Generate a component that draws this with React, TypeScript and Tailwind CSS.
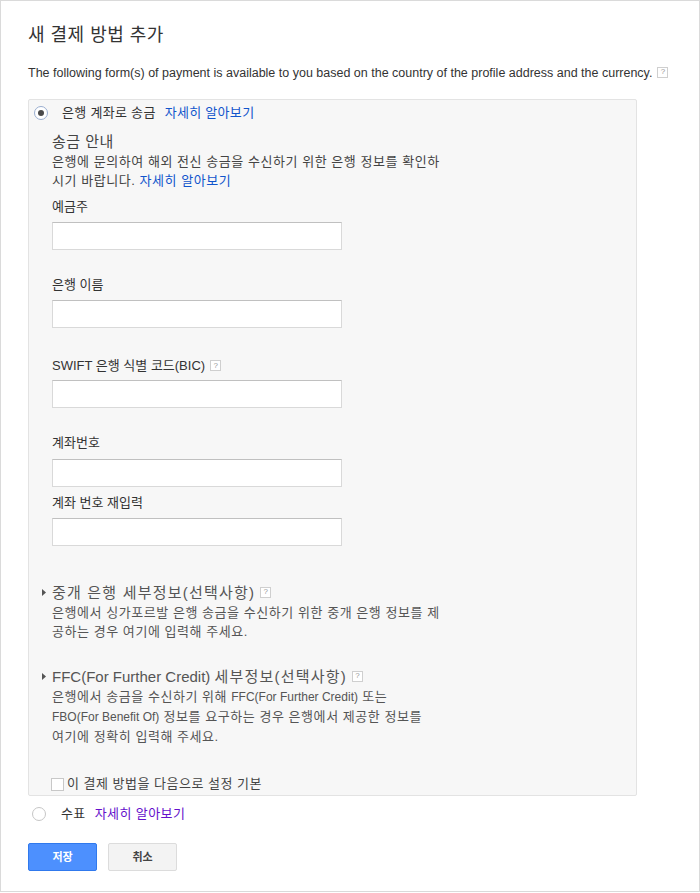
import React from "react";

const font = '"Liberation Sans", Arial, "Noto Sans CJK KR", sans-serif';

function Help() {
  return (
    <span className="inline-flex items-center justify-center w-[11px] h-[11px] border border-[#cfcfcf] bg-white text-[8px] leading-none text-[#999] align-middle ml-[5px] relative top-[-1px] tracking-normal">
      ?
    </span>
  );
}

function Field({ label, help, gapTop, labelGap }: { label: string; help?: boolean; gapTop: string; labelGap: string }) {
  return (
    <div className={gapTop}>
      <div className={`text-[13px] leading-[16px] text-[#333] ${labelGap}`}>
        {label}
        {help && <Help />}
      </div>
      <div className="w-[290px] h-[28px] bg-white border border-[#d9d9d9] border-t-[#c0c0c0]" />
    </div>
  );
}

function Triangle() {
  return (
    <svg width="5" height="7" viewBox="0 0 5 7" className="mt-[6px] mr-[5px] shrink-0">
      <path d="M0 0 L4 3.5 L0 7 Z" fill="#555" />
    </svg>
  );
}

function L({ children }: { children: React.ReactNode }) {
  return <span className="text-[12px] tracking-normal">{children}</span>;
}

export default function App() {
  return (
    <div
      className="w-[700px] h-[892px] border border-[#dadada] bg-white pl-[27px] text-[#333]"
      style={{ fontFamily: font }}
    >
      <div className="pt-[22px] text-[18px] leading-[24px] text-[#333] tracking-[0.5px]">새 결제 방법 추가</div>
      <div className="mt-[18px] text-[12.5px] leading-[16px] text-[#333] flex items-center">
        The following form(s) of payment is available to you based on the country of the profile address and the currency.
        <Help />
      </div>

      <div className="mt-[18px] w-[609px] h-[697px] bg-[#f7f7f7] border border-[#e3e3e3] rounded-[2px] pt-[4px]">
        <div className="flex items-center h-[18px] pl-[5px] text-[13px] tracking-[0.3px]">
          <div className="w-[14px] h-[14px] rounded-full border border-[#9aaed0] bg-white flex items-center justify-center">
            <div className="w-[6px] h-[6px] rounded-full bg-[#4a4a4a]" />
          </div>
          <span className="ml-[14px] text-[#333]">은행 계좌로 송금</span>
          <span className="ml-[9px] text-[#1155cc]">자세히 알아보기</span>
        </div>

        <div className="pl-[23px]">
          <div className="mt-[10px] text-[15px] leading-[20px] text-[#444] tracking-[0.5px]">송금 안내</div>
          <div className="text-[13px] leading-[19px] text-[#444] whitespace-nowrap tracking-[0.55px]">
            은행에 문의하여 해외 전신 송금을 수신하기 위한 은행 정보를 확인하
            <br />
            시기 바랍니다. <span className="text-[#1155cc]">자세히 알아보기</span>
          </div>

          <Field label="예금주" gapTop="mt-[9px]" labelGap="mb-[7px]" />
          <Field label="은행 이름" gapTop="mt-[27px]" labelGap="mb-[7px]" />
          <Field label="SWIFT 은행 식별 코드(BIC)" help gapTop="mt-[30px]" labelGap="mb-[6px]" />
          <Field label="계좌번호" gapTop="mt-[27px]" labelGap="mb-[8px]" />
          <Field label="계좌 번호 재입력" gapTop="mt-[8px]" labelGap="mb-[7px]" />

          <div className="mt-[37px] -ml-[10px] flex">
            <Triangle />
            <div>
              <div className="text-[15px] leading-[20px] text-[#555] flex items-center">
                <span className="tracking-[1.2px]">중개 은행 세부정보(선택사항)</span>
                <Help />
              </div>
              <div className="text-[13px] leading-[19px] text-[#555] whitespace-nowrap tracking-[0.55px]">
                은행에서 싱가포르발 은행 송금을 수신하기 위한 중개 은행 정보를 제
                <br />
                공하는 경우 여기에 입력해 주세요.
              </div>
            </div>
          </div>

          <div className="mt-[26px] -ml-[10px] flex">
            <Triangle />
            <div>
              <div className="text-[15px] leading-[20px] text-[#555] flex items-center">
                <span>
                  FFC(For Further Credit) <span className="tracking-[1.2px]">세부정보(선택사항)</span>
                </span>
                <Help />
              </div>
              <div className="text-[13px] leading-[19px] text-[#555] whitespace-nowrap tracking-[0.55px]">
                은행에서 송금을 수신하기 위해 <L>FFC(For Further Credit)</L> 또는
                <br />
                <L>FBO(For Benefit Of)</L> 정보를 요구하는 경우 은행에서 제공한 정보를
                <br />
                여기에 정확히 입력해 주세요.
              </div>
            </div>
          </div>

          <div className="mt-[30px] -ml-[1px] flex items-center h-[16px] text-[13px] text-[#444] tracking-[0.5px]">
            <div className="w-[13px] h-[13px] border border-[#c8c8c8] bg-white" />
            <span className="ml-[3px]">이 결제 방법을 다음으로 설정 기본</span>
          </div>
        </div>
      </div>

      <div className="mt-[9px] flex items-center h-[18px] pl-[4px] text-[13px] tracking-[0.4px]">
        <div className="w-[14px] h-[14px] rounded-full border border-[#c6c6c6] bg-white" />
        <span className="ml-[15px] text-[#333]">수표</span>
        <span className="ml-[9px] text-[#6611cc]">자세히 알아보기</span>
      </div>

      <div className="mt-[20px] flex gap-[11px]">
        <div className="w-[69px] h-[28px] rounded-[2px] bg-[#4d90fe] border border-[#3079ed] flex items-center justify-center text-[11px] font-bold text-white">
          저장
        </div>
        <div className="w-[69px] h-[28px] rounded-[2px] bg-[#f3f3f3] border border-[#dcdcdc] flex items-center justify-center text-[11px] font-bold text-[#444]">
          취소
        </div>
      </div>
    </div>
  );
}
